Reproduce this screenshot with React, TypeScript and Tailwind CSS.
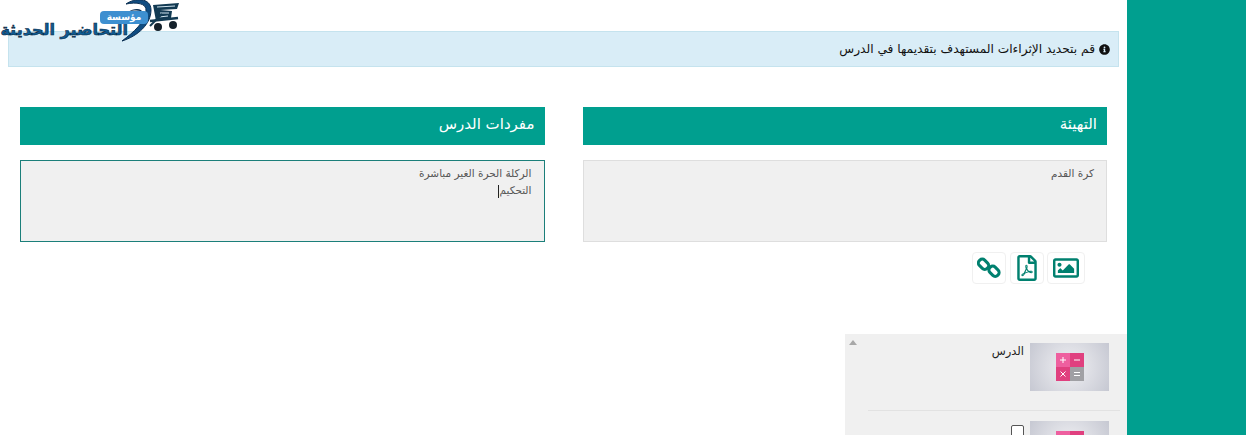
import { FaInfoCircle, FaRegFilePdf, FaRegImage } from "react-icons/fa";

const font = "font-['DejaVu_Sans',sans-serif]";

// Logo: swoosh and cart drawn, the name stays real text
function Logo() {
  return (
    <div dir="rtl" className="absolute top-0 left-0 w-[182px] h-[44px] overflow-hidden">
      <svg width="182" height="44" viewBox="0 0 182 44" className="absolute top-0 left-0">
        <path d="M126 4 C134 -2 151 -3 151 10 C151 24 138 36 122 41 C134 32 145 22 146 11 C147 3 136 2 126 4 Z" fill="#0f4c81" stroke="#0b2f52" strokeWidth="1" />
        <path d="M128 12 C134 8 142 8 143 13 C141 10 134 10 128 12 Z" fill="#0b2f52" />
        <path d="M153 5 L179 3 L177 9 L160 10 L172 11 L171 18 L156 21 Z" fill="#123a52" />
        <path d="M157 7 L175 6 M160 13 L169 13 M159 17 L168 16" stroke="#cfe3ee" strokeWidth="1" />
        <path d="M150 21 L178 18" stroke="#123a52" strokeWidth="2.5" />
        <path d="M150 26 L162 14" stroke="#123a52" strokeWidth="2" />
        <circle cx="158" cy="27" r="4" fill="#14212b" />
        <circle cx="173" cy="25" r="4" fill="#14212b" />
      </svg>
      <span className={`absolute right-[54px] top-[24px] h-[16px] text-[#0e5c94] text-[16px] leading-[12px] font-bold whitespace-nowrap [-webkit-text-stroke:0.6px_#08263f] ${font}`}>
        التحاضير الحديثة
      </span>
      <span className={`absolute left-[100px] top-[11px] w-[48px] h-[13px] rounded-[4px] bg-[#3d8fd0] text-white text-[9px] leading-[13px] text-center font-bold ${font}`}>
        مؤسسة
      </span>
    </div>
  );
}

function ChainIcon() {
  return (
    <svg width="24" height="24" viewBox="0 0 24 24" fill="none" stroke="#00806f" strokeWidth="3">
      <rect x="1" y="4.5" width="11" height="7.5" rx="3.4" transform="rotate(45 6.5 8.25)" />
      <rect x="11.5" y="11.5" width="11" height="7.5" rx="3.4" transform="rotate(45 17 15.25)" />
    </svg>
  );
}

function Thumb() {
  return (
    <div className="w-[79px] h-[48px] shrink-0 flex items-center justify-center bg-[radial-gradient(circle,#f1f1f4_0%,#c6c8d2_100%)]">
      <svg width="28" height="28" viewBox="0 0 28 28" stroke="#fff" strokeWidth="1">
        <rect width="14" height="14" fill="#ee5f9f" stroke="none" />
        <rect x="14" width="14" height="14" fill="#e0407f" stroke="none" />
        <rect y="14" width="14" height="14" fill="#e0407f" stroke="none" />
        <rect x="14" y="14" width="14" height="14" fill="#a0a0a4" stroke="none" />
        <path d="M4 7 H10 M7 4 V10 M18 7 H24 M4.5 18.5 L9.5 23.5 M9.5 18.5 L4.5 23.5 M18 19.5 H24 M18 22.5 H24" fill="none" />
      </svg>
    </div>
  );
}

function Column({ title, focused, children }: { title: string; focused?: boolean; children: React.ReactNode }) {
  return (
    <div>
      <div className="h-[38px] bg-[#009f8f] px-[10px] flex items-center">
        <h3 className={`text-white text-[15px] pb-[4px] ${font}`}>{title}</h3>
      </div>
      <div
        className={`mt-[15px] h-[82px] bg-[#f0f0f0] border px-[12px] py-[4px] text-[#555] text-[10.5px] leading-[17px] ${font} ${
          focused ? "border-[#1b7f7a]" : "border-[#dedede]"
        }`}
      >
        {children}
      </div>
    </div>
  );
}

export default function App() {
  return (
    <div dir="rtl" className={`relative w-[1246px] h-[435px] overflow-hidden bg-white flex ${font}`}>
      <div className="w-[119px] shrink-0 bg-[#009f8f]" />
      <main className="flex-1 pt-[31px]">
        <div className="mx-2 h-[36px] bg-[#d9edf7] border border-[#c5e3ee] px-[8px] flex items-center gap-[4px] text-[#111] text-[12.2px]">
          <FaInfoCircle size={11} className="shrink-0" />
          <span>قم بتحديد الإثراءات المستهدف بتقديمها في الدرس</span>
        </div>

        <div className="mt-[40px] px-5 grid grid-cols-2 gap-[38px]">
          <div>
            <Column title="التهيئة">كرة القدم</Column>
            <div className="mt-[10px] pr-[22px] flex gap-[3px] text-[#00806f]">
              <button className="w-[38px] h-[32px] border border-[#f0f0f0] rounded-[4px] flex items-center justify-center">
                <FaRegImage size={26} />
              </button>
              <button className="w-[34px] h-[32px] ml-[1px] border border-[#f0f0f0] rounded-[4px] flex items-center justify-center">
                <FaRegFilePdf size={26} />
              </button>
              <button className="w-[34px] h-[32px] border border-[#f0f0f0] rounded-[4px] flex items-center justify-center">
                <ChainIcon />
              </button>
            </div>
          </div>
          <Column title="مفردات الدرس" focused>
            <div>الركلة الحرة الغير مباشرة</div>
            <div>
              التحكيم<span className="inline-block w-px h-[13px] bg-[#222] align-middle" />
            </div>
          </Column>
        </div>

        <div className="relative mt-[50px] w-[282px] h-[101px] bg-[#f0f0f0] pt-[9px] pr-[18px]">
          <div className="absolute left-[4px] top-[6px] border-x-[4px] border-x-transparent border-b-[5px] border-b-[#a8a8a8]" />
          <div className="flex gap-[6px]">
            <Thumb />
            <span className="text-[#222] text-[11.5px] leading-[16px]">الدرس</span>
          </div>
          <div className="mt-[19px] -mr-[11px] ml-[23px] border-t border-[#e2e2e2]" />
          <div className="mt-[10px] flex gap-[6px]">
            <Thumb />
            <input type="checkbox" className="w-[13px] h-[13px] mt-[4px] appearance-none bg-white border border-[#555] rounded-[2px]" />
          </div>
        </div>
      </main>
      <Logo />
    </div>
  );
}
